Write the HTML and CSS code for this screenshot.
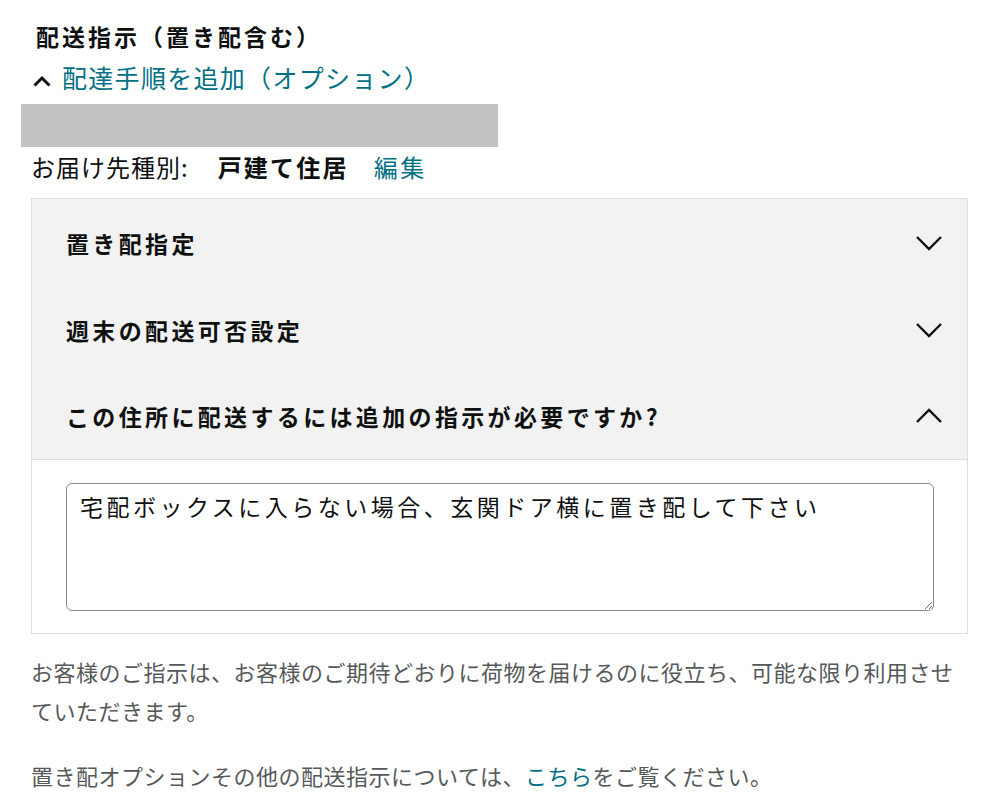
FILE: index.html
```html
<!DOCTYPE html>
<html lang="ja">
<head>
    <meta charset="UTF-8">
    <title>配送指示</title>
    <link rel="stylesheet" href="styles.css">
</head>
<body>
    <div class="page">
        <!-- Section heading -->
        <h2 class="title">配送指示（置き配含む）</h2>
        <a class="toggle-link" href="#">
            <svg class="toggle-icon" width="18" height="12" viewBox="0 0 18 12">
                <path d="M1.5 10.5 L9 3 L16.5 10.5" fill="none" stroke="#111" stroke-width="3"/>
            </svg>
            <span>配達手順を追加（オプション）</span>
        </a>
        <div class="redacted"></div>

        <div class="addr-type">
            <span>お届け先種別:</span>
            <strong>戸建て住居</strong>
            <a href="#">編集</a>
        </div>

        <!-- Accordion -->
        <div class="accordion">
            <div class="acc-row">
                <span>置き配指定</span>
                <svg class="chev" width="28" height="16" viewBox="0 0 28 16">
                    <path d="M2 2 L14 14 L26 2" fill="none" stroke="#111" stroke-width="2.4"/>
                </svg>
            </div>
            <div class="acc-row">
                <span>週末の配送可否設定</span>
                <svg class="chev" width="28" height="16" viewBox="0 0 28 16">
                    <path d="M2 2 L14 14 L26 2" fill="none" stroke="#111" stroke-width="2.4"/>
                </svg>
            </div>
            <div class="acc-row open">
                <span>この住所に配送するには追加の指示が必要ですか?</span>
                <svg class="chev" width="28" height="16" viewBox="0 0 28 16">
                    <path d="M2 14 L14 2 L26 14" fill="none" stroke="#111" stroke-width="2.4"/>
                </svg>
            </div>
            <div class="acc-body">
                <textarea class="notes">宅配ボックスに入らない場合、玄関ドア横に置き配して下さい</textarea>
            </div>
        </div>

        <p class="note">お客様のご指示は、お客様のご期待どおりに荷物を届けるのに役立ち、可能な限り利用させていただきます。</p>
        <p class="note">置き配オプションその他の配送指示については、<a href="#">こちら</a>をご覧ください。</p>
    </div>
</body>
</html>
```

FILE: styles.css
```css
* {
    margin: 0;
    padding: 0;
    box-sizing: border-box;
}

body {
    font-family: "Noto Sans CJK JP", "Noto Sans", sans-serif;
    color: #0f1111;
    background: #fff;
}

a {
    color: #007185;
    text-decoration: none;
}

.page {
    padding: 20px 20px 0 31px;
}

/* Heading */
.title {
    font-size: 23px;
    font-weight: bold;
    line-height: 32px;
    letter-spacing: 3px;
    padding-left: 5px;
}

.toggle-link {
    display: flex;
    align-items: center;
    gap: 11px;
    font-size: 25px;
    line-height: 36px;
    letter-spacing: 1.3px;
    margin-top: 7px;
}

.toggle-icon {
    margin: 8px 0 0 2px;
}

.redacted {
    width: 477px;
    height: 43px;
    background: #c2c2c2;
    margin: 9px 0 0 -10px;
}

.addr-type {
    display: flex;
    align-items: center;
    font-size: 24px;
    line-height: 44px;
    letter-spacing: 1px;
    margin-top: -2px;
}

.addr-type strong {
    margin-left: 29px;
    letter-spacing: 2.2px;
}

.addr-type a {
    margin-left: 25px;
    letter-spacing: 2.5px;
}

/* Accordion */
.accordion {
    margin-top: 9px;
    border: 1px solid #dedede;
    width: 937px;
}

.acc-row {
    display: flex;
    align-items: center;
    justify-content: space-between;
    height: 87px;
    padding: 0 24px 0 34px;
    background: #f2f2f2;
    font-size: 23px;
    font-weight: bold;
    letter-spacing: 3.35px;
}

.acc-row.open {
    border-bottom: 1px solid #dedede;
}

.acc-body {
    padding: 23px 33px 22px 34px;
}

.notes {
    display: block;
    width: 100%;
    height: 128px;
    border: 1px solid #888c8c;
    border-radius: 6px;
    padding: 6px 13px;
    font-family: inherit;
    font-size: 23px;
    line-height: 32px;
    letter-spacing: 3.5px;
    color: #0f1111;
    resize: vertical;
}

/* Footer notes */
.note {
    font-size: 22px;
    line-height: 39px;
    letter-spacing: 0.5px;
    color: #565959;
    margin-top: 18px;
    width: 935px;
}

.note + .note {
    margin-top: 26px;
}
```
